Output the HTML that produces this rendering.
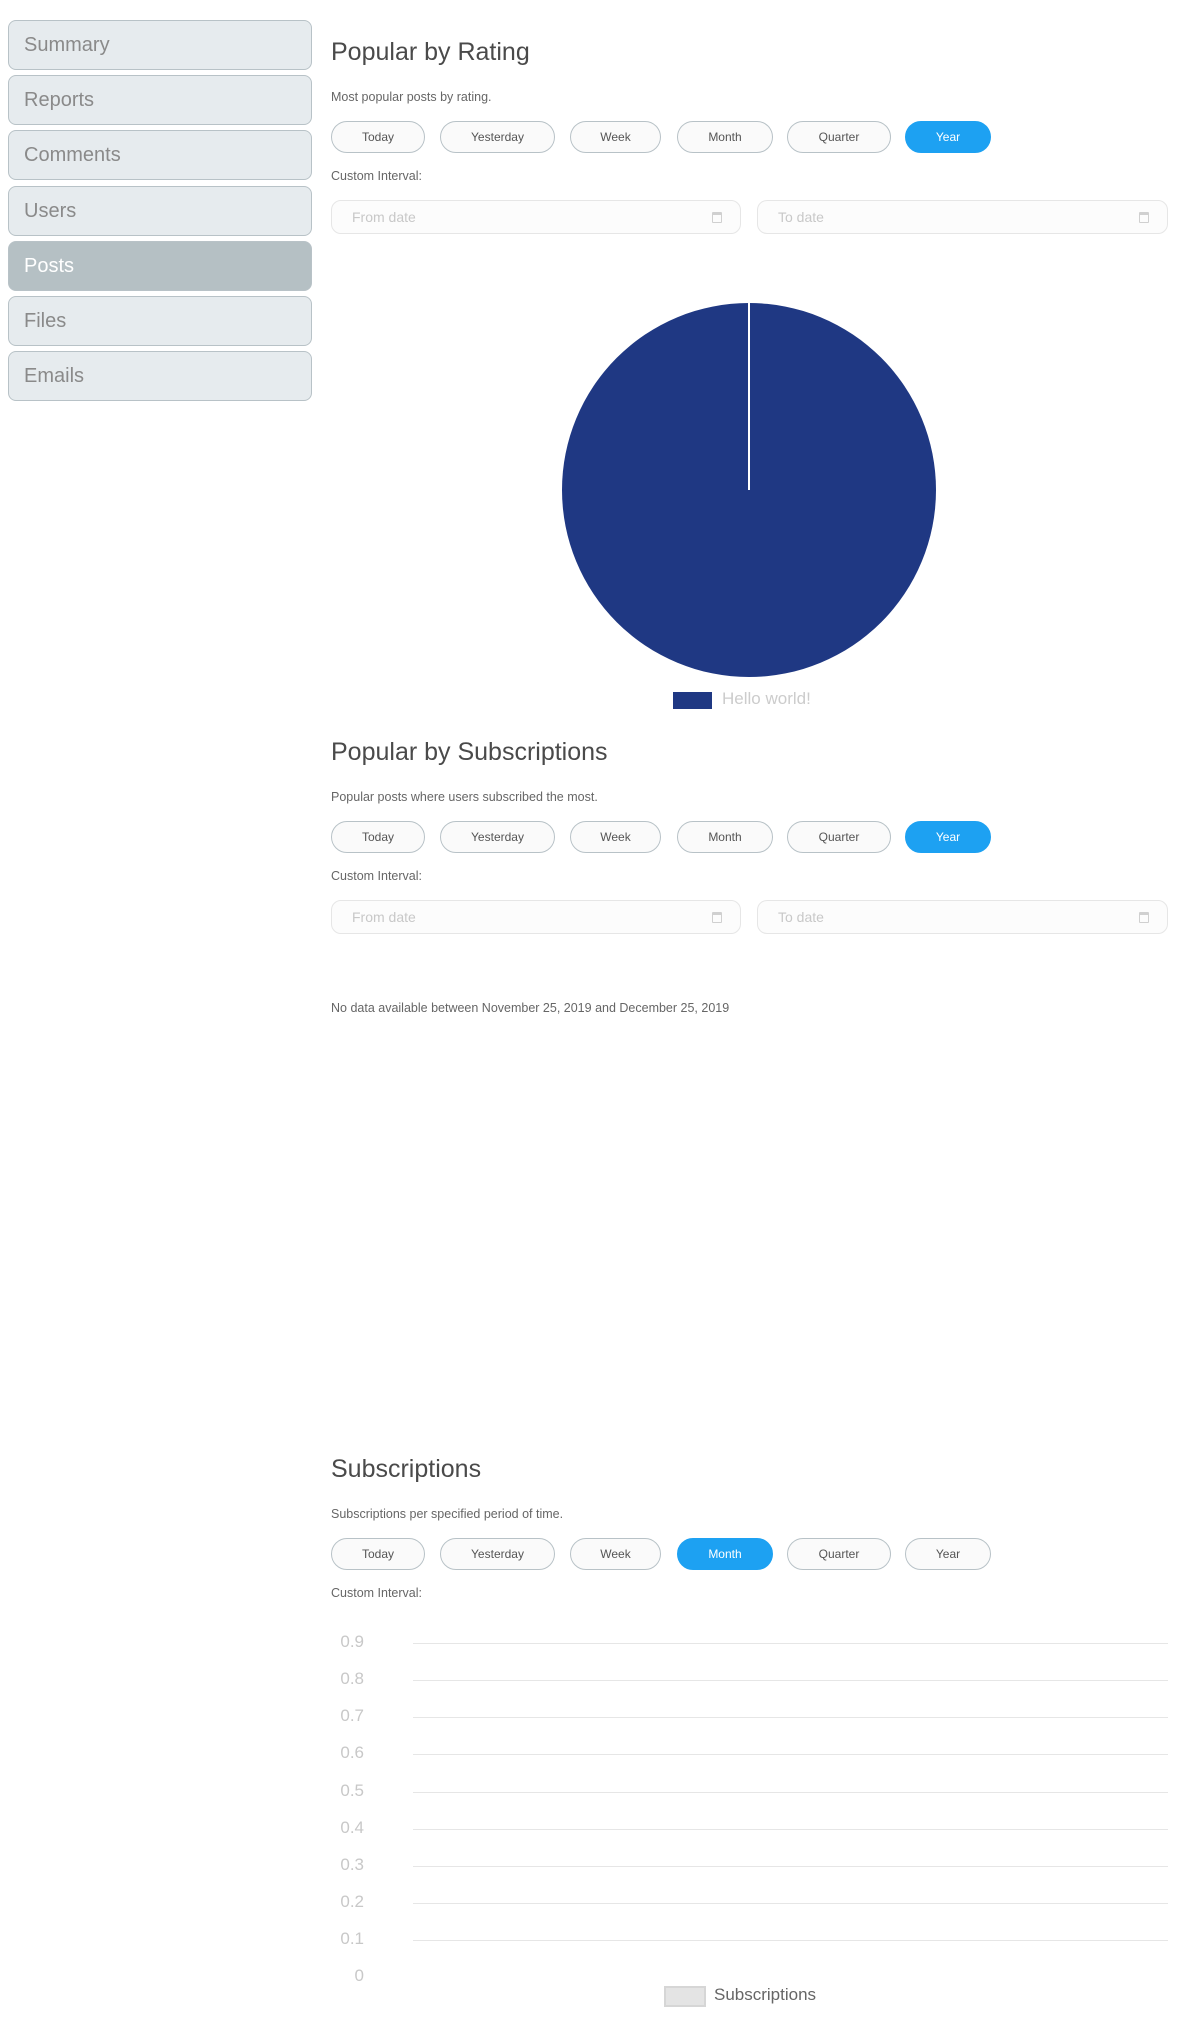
<!DOCTYPE html>
<html><head><meta charset="utf-8"><style>
*{box-sizing:border-box;margin:0;padding:0}
body{width:1182px;height:2032px;background:#fff;font-family:"Liberation Sans",sans-serif;position:relative;overflow:hidden;color:#555}
.nav{position:absolute;left:8px;width:304px;height:50px;background:#e6ebee;border:1px solid #b8c2c7;border-radius:8px;font-size:20px;color:#8a8a8a;padding-left:15px;line-height:48px}
.nav.act{background:#b5c0c4;color:#fff}
.abs{position:absolute}
h2{position:absolute;left:331px;font-weight:normal;font-size:25px;color:#4a4a4a}
.sub{position:absolute;left:331px;font-size:12.5px;color:#666}
.btn{position:absolute;height:32px;border:1px solid #b8c2c7;border-radius:16px;background:#fafafa;font-size:12px;color:#555;text-align:center;line-height:30px}
.btn.on{background:#1da1f2;border-color:#1da1f2;color:#fff}
.date{position:absolute;height:34px;border:1px solid #e6e6e6;border-radius:10px;background:#fcfcfc;font-size:14px;color:#c8c8c8;padding-left:20px;line-height:32px}
.cal{position:absolute;right:18px;top:11px;width:10px;height:11px;border:1px solid #d0d0d0;border-top-width:3px;border-radius:1px}
.grid{position:absolute;left:413px;width:755px;height:1px;background:#e6e6e6}
.yl{position:absolute;left:300px;width:64px;text-align:right;font-size:17px;color:#c8c8c8;line-height:20px}
</style></head><body>
<div class="nav" style="top:20px">Summary</div>
<div class="nav" style="top:75px">Reports</div>
<div class="nav" style="top:130px">Comments</div>
<div class="nav" style="top:186px">Users</div>
<div class="nav act" style="top:241px">Posts</div>
<div class="nav" style="top:296px">Files</div>
<div class="nav" style="top:351px">Emails</div>

<h2 style="top:38px">Popular by Rating</h2>
<div class="sub" style="top:90px">Most popular posts by rating.</div>
<div class="btn" style="top:121px;left:331px;width:94px">Today</div>
<div class="btn" style="top:121px;left:440px;width:115px">Yesterday</div>
<div class="btn" style="top:121px;left:570px;width:91px">Week</div>
<div class="btn" style="top:121px;left:677px;width:96px">Month</div>
<div class="btn" style="top:121px;left:787px;width:104px">Quarter</div>
<div class="btn on" style="top:121px;left:905px;width:86px">Year</div>
<div class="sub" style="top:169px">Custom Interval:</div>
<div class="date" style="top:200px;left:331px;width:410px">From date<div class="cal"></div></div>
<div class="date" style="top:200px;left:757px;width:411px">To date<div class="cal"></div></div>
<svg class="abs" style="left:559px;top:299px" width="380" height="380"><circle cx="190" cy="191" r="187" fill="#1f3883"/><line x1="190" y1="4" x2="190" y2="191" stroke="#fff" stroke-width="2"/></svg>
<div class="abs" style="left:673px;top:692px;width:39px;height:17px;background:#1f3883"></div>
<div class="abs" style="left:722px;top:689px;font-size:17px;color:#ccc">Hello world!</div>

<h2 style="top:738px">Popular by Subscriptions</h2>
<div class="sub" style="top:790px">Popular posts where users subscribed the most.</div>
<div class="btn" style="top:821px;left:331px;width:94px">Today</div>
<div class="btn" style="top:821px;left:440px;width:115px">Yesterday</div>
<div class="btn" style="top:821px;left:570px;width:91px">Week</div>
<div class="btn" style="top:821px;left:677px;width:96px">Month</div>
<div class="btn" style="top:821px;left:787px;width:104px">Quarter</div>
<div class="btn on" style="top:821px;left:905px;width:86px">Year</div>
<div class="sub" style="top:869px">Custom Interval:</div>
<div class="date" style="top:900px;left:331px;width:410px">From date<div class="cal"></div></div>
<div class="date" style="top:900px;left:757px;width:411px">To date<div class="cal"></div></div>
<div class="sub" style="top:1001px">No data available between November 25, 2019 and December 25, 2019</div>

<h2 style="top:1455px">Subscriptions</h2>
<div class="sub" style="top:1507px">Subscriptions per specified period of time.</div>
<div class="btn" style="top:1538px;left:331px;width:94px">Today</div>
<div class="btn" style="top:1538px;left:440px;width:115px">Yesterday</div>
<div class="btn" style="top:1538px;left:570px;width:91px">Week</div>
<div class="btn on" style="top:1538px;left:677px;width:96px">Month</div>
<div class="btn" style="top:1538px;left:787px;width:104px">Quarter</div>
<div class="btn" style="top:1538px;left:905px;width:86px">Year</div>
<div class="sub" style="top:1586px">Custom Interval:</div>

<div class="grid" style="top:1643px"></div><div class="yl" style="top:1632px">0.9</div>
<div class="grid" style="top:1680px"></div><div class="yl" style="top:1669px">0.8</div>
<div class="grid" style="top:1717px"></div><div class="yl" style="top:1706px">0.7</div>
<div class="grid" style="top:1754px"></div><div class="yl" style="top:1743px">0.6</div>
<div class="grid" style="top:1792px"></div><div class="yl" style="top:1781px">0.5</div>
<div class="grid" style="top:1829px"></div><div class="yl" style="top:1818px">0.4</div>
<div class="grid" style="top:1866px"></div><div class="yl" style="top:1855px">0.3</div>
<div class="grid" style="top:1903px"></div><div class="yl" style="top:1892px">0.2</div>
<div class="grid" style="top:1940px"></div><div class="yl" style="top:1929px">0.1</div>
<div class="yl" style="top:1966px">0</div>
<div class="abs" style="left:664px;top:1986px;width:42px;height:21px;background:#e4e4e4;border:2px solid #d6d6d6"></div>
<div class="abs" style="left:714px;top:1985px;font-size:17px;color:#666">Subscriptions</div>
</body></html>
